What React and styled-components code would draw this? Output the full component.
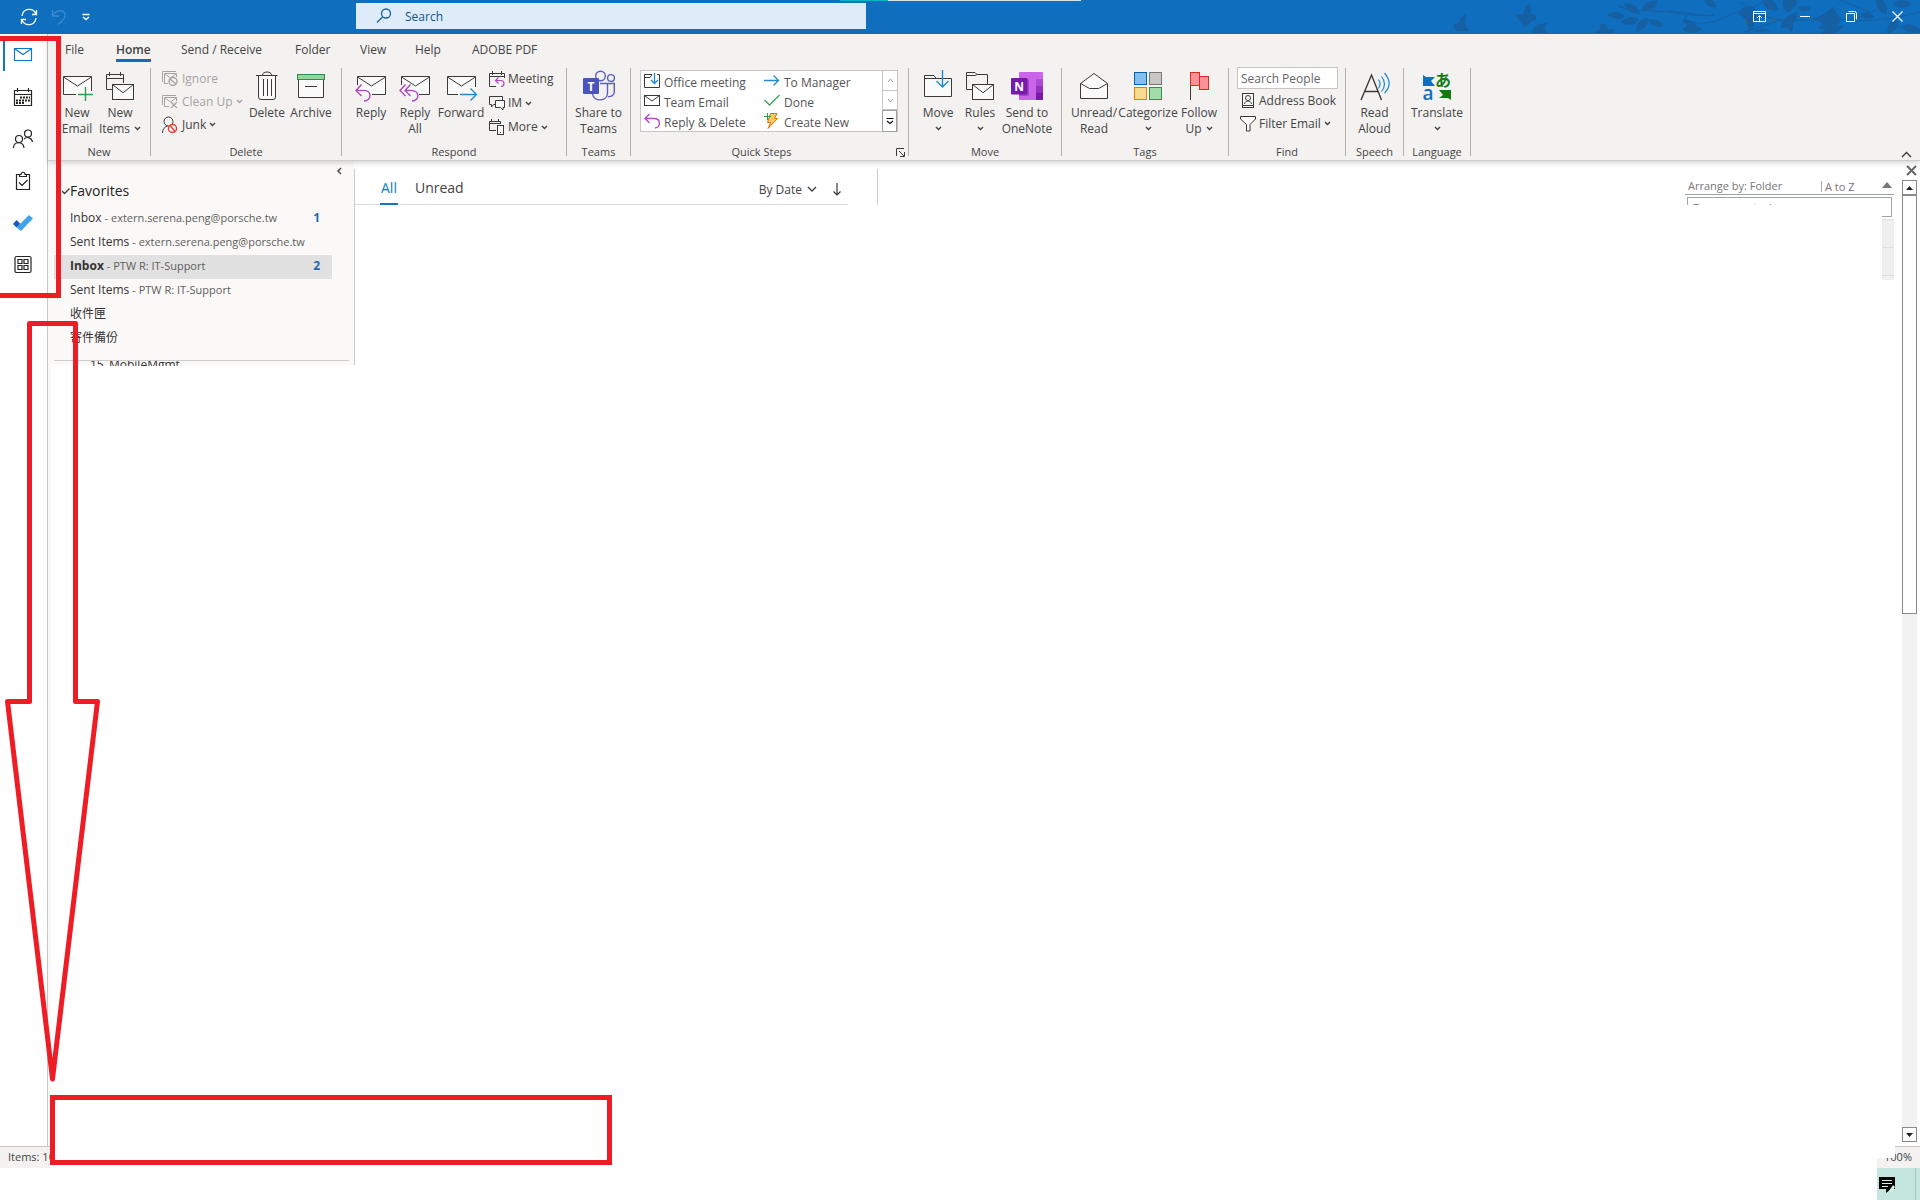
import React from 'react';
import styled, { createGlobalStyle } from 'styled-components';

const App = () => {
  return (
    <Page>
      <GlobalStyle />
      <TitleBar />
      <Body>
        <Rail />
        <Workspace>
          <Ribbon />
          <Content>
            <FolderPane />
            <PaneDivider $height={196} />
            <MessageList />
            <PaneDivider $height={36} />
            <FolderSizes />
            <ScrollBar />
          </Content>
        </Workspace>
      </Body>
      <StatusBar />
      <Taskbar />
      <Annotations />
    </Page>
  );
};

/* ---------- small shared drawings ---------- */

const Svg = ({ w, h = w, children, ...rest }) => (
  <svg width={w} height={h} viewBox={`0 0 ${w} ${h}`} fill='none' stroke='#3b3a39' aria-hidden='true' {...rest}>
    {children}
  </svg>
);

const Chevron = ({ color = '#444' }) => (
  <Svg w={7} h={5} stroke={color} strokeWidth='1.4'>
    <path d='M1 1l2.5 2.5L6 1' />
  </Svg>
);

const Envelope = ({ x, y, w, h }) => (
  <g transform={`translate(${x} ${y})`}>
    <rect width={w} height={h} fill='#fafafa' />
    <path d={`M0 0L${w / 2} ${h * 0.55}L${w} 0`} />
  </g>
);

const icons = {
  newEmail: (
    <Svg w={32}>
      <rect x='2.5' y='6.5' width='28' height='18' fill='#fafafa' stroke='none' />
      <path d='M15 24.500H2.500V6.500H30.500V21M2.500 7l14 9 14-9' />
      <path d='M24.500 17v14M17 24.500h15' stroke='#2f9e4f' strokeWidth='1.4' />
    </Svg>
  ),
  newItems: (
    <Svg w={32}>
      <path d='M8 19.500H2.500V4.500H19.500V13M2.500 8.500H19.500M5.500 2v4M16.500 2v4' />
      <Envelope x={8.5} y={14.5} w={21} h={15} />
    </Svg>
  ),
  trash: (
    <Svg w={32}>
      <path d='M7.500 6V27q0 2.500 2.500 2.500H22q2.500 0 2.500-2.500V6' fill='#fafafa' />
      <path d='M5 5.500H26.500M11.500 5c0-4 9-4 9 0M12.500 9v17M16.500 9v17M20.500 9v17' />
    </Svg>
  ),
  archive: (
    <Svg w={32}>
      <path d='M3.500 9V27.500H28.500V9' fill='#fafafa' />
      <rect x='2.5' y='4.5' width='27' height='5' fill='#92d49d' stroke='#2f8f46' />
      <path d='M10 16.500h12' />
    </Svg>
  ),
  reply: (
    <Svg w={32}>
      <rect x='2.5' y='6.5' width='28' height='18' fill='#fafafa' stroke='none' />
      <path d='M2.500 15V6.500H30.500V24.500H17M2.500 7l14 9 14-9' />
      <path d='M6.500 14.500L1 20.500l5.500 5.500M1 20.500h8c8 0 8 10 0 10.500' stroke='#b146c2' strokeWidth='1.4' />
    </Svg>
  ),
  replyAll: (
    <Svg w={32}>
      <rect x='2.5' y='6.5' width='28' height='18' fill='#fafafa' stroke='none' />
      <path d='M2.500 15V6.500H30.500V24.500H20M2.500 7l14 9 14-9' />
      <path d='M6.500 14.500L1 20.500l5.500 5.500M11.500 14.500L6 20.500l5.500 5.500M6 20.500h6c9 0 9 10 1 10.500' stroke='#b146c2' strokeWidth='1.4' />
    </Svg>
  ),
  forward: (
    <Svg w={32}>
      <rect x='2.5' y='6.5' width='28' height='18' fill='#fafafa' stroke='none' />
      <path d='M13 24.500H2.500V6.500H30.500V17M2.500 7l14 9 14-9' />
      <path d='M15 24.500H31.500M25.500 18.500l6 6-6 6' stroke='#1f8ad2' strokeWidth='1.4' />
    </Svg>
  ),
  teams: (
    <Svg w={32} stroke='#5b5fc7' strokeWidth='1.4'>
      <circle cx='17.5' cy='6' r='4.8' />
      <circle cx='28' cy='8' r='3.400' />
      <path d='M17 13.500H24.500V23c0 9-14 9-15 1M24.500 13.500H31.300V22c0 3-3 5-6.500 4.500' />
      <rect x='0' y='8' width='16' height='16' rx='1' fill='#4b53bc' stroke='none' />
      <text x='8' y='20.500' textAnchor='middle' fontSize='12' fontWeight='700' fill='#fff' stroke='none'>T</text>
    </Svg>
  ),
  move: (
    <Svg w={32}>
      <path d='M2.500 5.500H12l2 3H29.500V26.500H2.500zM2.500 8.500H14' fill='#fafafa' />
      <path d='M20.500 0V17M14.500 11l6 6 6-6' stroke='#1f8ad2' strokeWidth='1.4' />
    </Svg>
  ),
  rules: (
    <Svg w={32}>
      <path d='M8 19.500H2.500V2.500H11l2 2H23.500V14M2.500 5.500H11l2-1' />
      <Envelope x={8.5} y={14.5} w={21} h={15} />
    </Svg>
  ),
  oneNote: (
    <Svg w={32} stroke='none'>
      <rect x='8' y='2' width='24' height='28' rx='1' fill='#ca64ea' />
      <path d='M25 9h7v7h-7z' fill='#ae4bd5' />
      <path d='M25 16h7v7h-7z' fill='#9332bf' />
      <path d='M25 23h7v6q0 1-1 1h-6z' fill='#7719aa' />
      <path d='M8 9h9q1 0 1 1v15q0 1-1 1H8z' fill='#a349c8' />
      <rect x='0' y='8' width='16.500' height='16.500' rx='1' fill='#7719aa' />
      <text x='8.200' y='20.500' textAnchor='middle' fontSize='12' fontWeight='700' fill='#fff'>N</text>
    </Svg>
  ),
  openMail: (
    <Svg w={32}>
      <path d='M2.500 13.500L16 3.500l13.500 10V28.500H2.500z' fill='#fafafa' />
      <path d='M2.500 13.500l9 5h9l9-5' />
    </Svg>
  ),
  categorize: (
    <Svg w={32}>
      <rect x='2.500' y='2.500' width='12' height='12' fill='#83beec' stroke='#0063b1' />
      <rect x='17.500' y='2.500' width='12' height='12' fill='#c8c6c4' stroke='#797775' />
      <rect x='2.500' y='17.500' width='12' height='12' fill='#f8db8f' stroke='#e07e10' />
      <rect x='17.500' y='17.500' width='12' height='12' fill='#a1ddaa' stroke='#309048' />
    </Svg>
  ),
  flag: (
    <Svg w={32} stroke='#d92c20'>
      <path d='M7.500 2v28' stroke='#3b3a39' />
      <rect x='7.500' y='2.500' width='9' height='13' fill='#ff9199' />
      <rect x='16.500' y='6.500' width='9' height='13' fill='#ff9199' />
    </Svg>
  ),
  readAloud: (
    <Svg w={32}>
      <path d='M2 30L12.500 5 22.500 30M5.500 21.500H19' strokeWidth='1.4' />
      <path d='M19.500 9.500c2 3 2 6 0 9M22.500 6.500c4 5 4 10 0 15M25.500 3c6 7 6 14 0 20' stroke='#1f8ad2' strokeWidth='1.200' />
    </Svg>
  ),
  translate: (
    <Svg w={32} stroke='none'>
      <path d='M2 5l3 2 9 0-4 4 4 5H2z' fill='#106ebe' />
      <path d='M30 30l-3-2-9 0 4-3-4-5h12z' fill='#107c10' />
      <text x='1.500' y='30' fontSize='19' fontWeight='600' fill='#106ebe'>a</text>
      <text x='14' y='16' fontSize='16' fontWeight='700' fill='#107c10'>あ</text>
    </Svg>
  ),
  ignore: (
    <Svg w={18} stroke='#a6a4a2'>
      <path d='M1.500 12V1.500H15M3.500 14V3.500H15.500V7M4 4l5.500 4L15 4M3.500 13.500H7' />
      <circle cx='12' cy='11.500' r='4' strokeWidth='1.400' />
      <path d='M9 9l6 5' strokeWidth='1.400' />
    </Svg>
  ),
  cleanUp: (
    <Svg w={18} stroke='#a6a4a2'>
      <path d='M1.500 12V2.500H15M3.500 13.500V4.500H15.500V8M4 5l5.500 4L15 5M3.500 13.500H8' />
      <path d='M10 9l6 6M16 9l-6 6' strokeWidth='1.200' />
    </Svg>
  ),
  junk: (
    <Svg w={18}>
      <circle cx='7.500' cy='5.500' r='4.500' />
      <path d='M1.500 17c0-4 2-6 5-7' />
      <circle cx='11.500' cy='12.500' r='4' fill='#fff' stroke='#e8372c' strokeWidth='1.400' />
      <path d='M9 9.500l5 6' stroke='#e8372c' strokeWidth='1.400' />
    </Svg>
  ),
  meeting: (
    <Svg w={16}>
      <path d='M7 15.500H.500V2.500H15.500V7M.500 5.500H15.500M3.500 0v4M12.500 0v4' />
      <path d='M9.500 6.500l-3 3 3 3M7 9.500h5c4 0 4 6 0 6' stroke='#b146c2' strokeWidth='1.200' />
    </Svg>
  ),
  im: (
    <Svg w={16}>
      <path d='M6 9.500H4.500L2.500 12V9.500H.500V1.500H13.500V5' />
      <path d='M6.500 5.500H15.500V12.500H14V15l-2.500-2.500h-5z' fill='#fafafa' />
    </Svg>
  ),
  more: (
    <Svg w={16}>
      <path d='M7 11.500H.500V2.500H11.500V5M.500 4.500H11.500M2.500 0v3M9.500 0v3' />
      <rect x='8.500' y='6.500' width='6' height='9' fill='#fafafa' />
      <path d='M11 13.500h1' />
    </Svg>
  ),
  stepMove: (
    <Svg w={16}>
      <path d='M8 1.500H.500V14.500H15.500V1.500H13M.500 4.500H6l2-3' />
      <path d='M10.500 0v10M7 7l3.500 3.500L14 7' stroke='#1f8ad2' strokeWidth='1.300' />
    </Svg>
  ),
  stepMail: (
    <Svg w={16}>
      <rect x='.500' y='2.500' width='15' height='10' />
      <path d='M1 3l7 5 7-5' />
    </Svg>
  ),
  stepReply: (
    <Svg w={16} stroke='#b146c2' strokeWidth='1.300'>
      <path d='M5.500 1L1 5.500 5.500 10M1 5.500h9c7 0 7 9 1 9.500' />
    </Svg>
  ),
  stepForward: (
    <Svg w={16} stroke='#1f8ad2' strokeWidth='1.300'>
      <path d='M0 7.500h14.500M9.500 2.500l5 5-5 5' />
    </Svg>
  ),
  stepDone: (
    <Svg w={16} stroke='#3aa35b' strokeWidth='1.300'>
      <path d='M.500 7l5 5L15.500 2' />
    </Svg>
  ),
  stepNew: (
    <Svg w={16} stroke='#e07000'>
      <path d='M6.500.500H13L10.500 5.500H13.500L4 15.500 6.500 9.500H3.500z' fill='#ffc66b' />
      <path d='M3.500 0v7M0 3.500h7' stroke='#2f9e4f' />
    </Svg>
  ),
  addressBook: (
    <Svg w={16}>
      <rect x='2.500' y='.500' width='11' height='14' fill='#fafafa' />
      <path d='M2.500 12.500h11' />
      <circle cx='8' cy='5' r='2.500' />
      <path d='M4.500 11c.500-4 6.500-4 7 0' />
    </Svg>
  ),
  filter: (
    <Svg w={16}>
      <path d='M.500.500h15V3L10 8.500V15H6.500V8.500L.500 3z' fill='#fafafa' />
    </Svg>
  ),
};

/* ---------- title bar ---------- */

const Foliage = () => (
  <Svg w={480} h={34} fill='#155fa3' stroke='#155fa3' strokeWidth='1'>
    {/* birds */}
    <path stroke='none' d='M13 25l6-2 2-5 5-4-1 10 2 4 3 3-7 0-7 0zM75 15l8-1 3-8 4-3 1 10 5 3 0 4-5 1-4 5-3 1-4-6zM93 29l5-5 10-1-4 5 3 5H92zM155 32l5-3 1-5 4 0 3 5 6 0 0 4h-18z' />
    {/* branches */}
    <g fill='none'>
      <path d='M178 6c20 8 26 2 50 6s34 4 46 3M212 13c22-6 40 4 62 2M248 13l-6 12M252 22c24 6 44-14 60-14L326 0' />
      <path d='M300 2c24 16 30 20 74 18s50 6 106-8M304 32c16-4 22-8 38-12M410 22l26-12M445 20l24 12M400 0l30 12' />
    </g>
    {/* leaves */}
    <g stroke='none'>
      <path d='M167 15c8-5 13-3 18 2-7 4-12 2-18-2zM184 4c8-2 14 2 16 10-8 0-13-4-16-10zM181 22c5-5 12-6 18-3-3 6-11 8-18 3zM196 32c0-8 4-13 12-14 1 7-4 12-12 14zM202 9c3-6 8-9 15-8 0 7-6 11-15 8zM208 20c7-2 12 1 16 6-7 2-13 0-16-6z' />
      <path d='M264 0c2 5 6 8 12 7 0-4-3-7-6-7zM243 19c6 0 12 3 14 9-8 0-13-3-14-9zM242 29c7-5 15-4 20 0-6 5-14 5-20 0zM298 14c6-9 12-10 17-6 3 9 0 19-6 25-2-8 1-14-11-19z' />
      <path d='M322 0c2 8 8 12 16 10-1-6-5-10-8-10zM343 0h14c0 6-4 10-10 12-4-3-5-7-4-12zM340 28c2-9 8-14 18-15-1 9-8 16-18 15zM350 20c4 4 4 8 1 12-4-3-5-8-1-12zM313 32c6-4 13-4 17-1zM358 8c3-3 8-3 13 0-4 4-9 4-13 0z' />
      <path d='M372 18c14-1 14-8 22-11 1 5 4 8 8 13-6 8-16 12-24 8l6-4zM382 33c6-6 14-8 22-7-4 6-12 9-22 7zM436 0c0 8 4 13 10 14 3-5 0-11-4-14zM448 34c-2-8 2-13 8-14 4 5 1 11-8 14zM462 26c8-4 14-1 18 4v3c-8 0-15-1-18-7zM452 4c6-5 14-5 20 0-6 5-14 5-20 0zM420 14c6-3 12-1 14 3-5 3-11 2-14-3z' />
    </g>
  </Svg>
);

const TitleBar = () => (
  <Title>
    <QuickAccess>
      <TitleButton aria-label='Send/Receive All Folders'>
        <Svg w={18} stroke='#fff' strokeWidth='1.300'>
          <path d='M2 8c1-8 11-9 14-2M16.500 2v4.500H12M16 10c-1 8-11 9-14 2M1.500 16v-4.500H6' />
        </Svg>
      </TitleButton>
      <TitleButton aria-label='Undo'>
        <Svg w={16} stroke='#3c8ad0' strokeWidth='1.300'>
          <path d='M1.500 1v6H8M1.500 7C6-1 15 1 14 7c0 3-3 5-7 8.500' />
        </Svg>
      </TitleButton>
      <TitleButton aria-label='Customize'>
        <Svg w={8} h={8} stroke='#fff' strokeWidth='1.400'>
          <path d='M.500 1.500h7M1 4l3 2.500L7 4' />
        </Svg>
      </TitleButton>
    </QuickAccess>
    <SearchBox>
      <Svg w={16} stroke='#1b6098' strokeWidth='1.300'>
        <circle cx='10' cy='5.500' r='4.500' />
        <path d='M6.500 9L1 14.500' />
      </Svg>
      <input aria-label='Search' placeholder='Search' />
    </SearchBox>
    <TopStrip />
    <Decoration>
      <Foliage />
    </Decoration>
    <WindowButtons>
      <button aria-label='Ribbon display options'>
        <Svg w={13} h={11} stroke='#fff'>
          <path d='M.500.500h12v10H.500zM.500 2.500h12M6.500 10V5M4 7l2.500-2.500L9 7' />
        </Svg>
      </button>
      <button aria-label='Minimize'>
        <Svg w={10} h={11} stroke='#fff'><path d='M0 5.500h10' /></Svg>
      </button>
      <button aria-label='Restore'>
        <Svg w={11} stroke='#fff'><path d='M.500 2.500h8v8h-8zM2.500.500h6q2 0 2 2v6' /></Svg>
      </button>
      <button aria-label='Close'>
        <Svg w={11} stroke='#fff' strokeWidth='1.200'><path d='M.500.500l10 10M10.500.500l-10 10' /></Svg>
      </button>
    </WindowButtons>
  </Title>
);

/* ---------- left rail ---------- */

const Rail = () => (
  <RailNav aria-label='Modules'>
    <RailButton $active aria-label='Mail'>
      <Svg w={20} stroke='#0f78c8' strokeWidth='1.200'>
        <path d='M1.500 3.500h17v12h-17zM2 4l8 5.500L18 4' />
      </Svg>
    </RailButton>
    <RailButton aria-label='Calendar'>
      <Svg w={20} stroke='#252423' strokeWidth='1.200'>
        <path d='M1.500 3.500h17v15h-17zM1.500 7.500h17M4.500 1v4M15.500 1v4' />
        <path d='M7 10.500h10M3 13.500h14M3 16h9' strokeWidth='2' strokeDasharray='2 1' />
      </Svg>
    </RailButton>
    <RailButton aria-label='People'>
      <Svg w={20} stroke='#252423' strokeWidth='1.200'>
        <circle cx='6' cy='10' r='3.500' />
        <circle cx='15' cy='4.500' r='3.500' />
        <path d='M.500 19c0-7 10-7 10.500 0M11 10c3-3 8-1 8.500 3' />
      </Svg>
    </RailButton>
    <RailButton aria-label='Tasks'>
      <Svg w={20} stroke='#252423' strokeWidth='1.200'>
        <path d='M6 3.500H3.500v15h13v-15H14M6.500 5.500v-2H8c0-3 4-3 4 0h1.500v2zM6 11.500l3 3L14.500 9' />
      </Svg>
    </RailButton>
    <RailButton aria-label='To Do'>
      <Svg w={20} stroke='none'>
        <path d='M3.500 7l4 4-4 3.500L0 11z' fill='#185abd' />
        <path d='M3.500 14.500L16 2l4 3.500L8 18z' fill='#41a5ee' />
      </Svg>
    </RailButton>
    <RailButton aria-label='Apps'>
      <Svg w={20} stroke='#252423' strokeWidth='1.200'>
        <rect x='2' y='1.500' width='16' height='16' rx='1.500' />
        <path d='M5 4.500h4v4H5zM11 4.500h4v4h-4zM5 10.500h4v4H5zM11 10.500h4v4h-4z' />
      </Svg>
    </RailButton>
  </RailNav>
);

/* ---------- ribbon ---------- */

const tabs = [
  { label: 'File', width: 51 },
  { label: 'Home', width: 65, active: true },
  { label: 'Send / Receive', width: 114 },
  { label: 'Folder', width: 65 },
  { label: 'View', width: 55 },
  { label: 'Help', width: 57 },
  { label: 'ADOBE PDF', width: 80 },
];

const Big = ({ icon, lines, width, menu }) => (
  <BigButton $width={width}>
    {icons[icon]}
    {lines.map((line, i) => (
      <span key={line}>
        {line}
        {menu && i === 1 && <Chevron />}
      </span>
    ))}
    {menu && lines.length === 1 && <span><Chevron /></span>}
  </BigButton>
);

const Small = ({ icon, label, menu, disabled }) => (
  <SmallButton disabled={disabled}>
    {icons[icon]}
    <span>{label}</span>
    {menu && <Chevron color={disabled ? '#a6a4a2' : '#444'} />}
  </SmallButton>
);

const Group = ({ label, width, pad = 0, launcher, center, children }) => (
  <>
    <GroupBox $width={width}>
      <GroupControls $pad={pad} $center={center}>{children}</GroupControls>
      <GroupLabel $launcher={launcher}>{label}</GroupLabel>
      {launcher && (
        <Launcher aria-label='Quick Steps settings'>
          <Svg w={9}><path d='M.500 8V.500H8M3 3l5 5M8.500 4v4.500H4' /></Svg>
        </Launcher>
      )}
    </GroupBox>
    <GroupDivider />
  </>
);

const steps = [
  ['stepMove', 'Office meeting'],
  ['stepForward', 'To Manager'],
  ['stepMail', 'Team Email'],
  ['stepDone', 'Done'],
  ['stepReply', 'Reply & Delete'],
  ['stepNew', 'Create New'],
];

const Ribbon = () => (
  <RibbonBox>
    <TabRow>
      {tabs.map((tab) => (
        <Tab key={tab.label} $width={tab.width} $active={tab.active}>
          <span>{tab.label}</span>
        </Tab>
      ))}
    </TabRow>
    <GroupRow>
      <Group label='New' width={102} pad={8}>
        <Big icon='newEmail' lines={['New', 'Email']} width={42} />
        <Big icon='newItems' lines={['New', 'Items']} width={44} menu />
      </Group>
      <Group label='Delete' width={190} pad={10}>
        <SmallColumn $width={86} $row={23}>
          <Small icon='ignore' label='Ignore' disabled />
          <Small icon='cleanUp' label='Clean Up' menu disabled />
          <Small icon='junk' label='Junk' menu />
        </SmallColumn>
        <Big icon='trash' lines={['Delete']} width={40} />
        <Big icon='archive' lines={['Archive']} width={48} />
      </Group>
      <Group label='Respond' width={224} pad={7}>
        <Big icon='reply' lines={['Reply']} width={44} />
        <Big icon='replyAll' lines={['Reply', 'All']} width={44} />
        <Big icon='forward' lines={['Forward']} width={48} />
        <SmallColumn $width={80} $pad={4} $row={24}>
          <Small icon='meeting' label='Meeting' />
          <Small icon='im' label='IM' menu />
          <Small icon='more' label='More' menu />
        </SmallColumn>
      </Group>
      <Group label='Teams' width={63} center>
        <Big icon='teams' lines={['Share to', 'Teams']} width={60} />
      </Group>
      <Group label='Quick Steps' width={277} pad={9} launcher>
        <Gallery>
          <StepGrid>
            {steps.map(([icon, label]) => (
              <Step key={label}>
                {icons[icon]}
                {label}
              </Step>
            ))}
          </StepGrid>
          <GalleryScroll>
            <button aria-label='Previous row'>
              <Svg w={7} h={5} stroke='#a19f9d'><path d='M1 4l2.500-3L6 4' /></Svg>
            </button>
            <button aria-label='Next row'>
              <Svg w={7} h={5} stroke='#a19f9d'><path d='M1 1l2.500 3L6 1' /></Svg>
            </button>
            <button aria-label='More quick steps'>
              <Svg w={8} h={8} stroke='#111' strokeWidth='1.200'><path d='M.500 1.500h7M1 4l3 2.500L7 4' /></Svg>
            </button>
          </GalleryScroll>
        </Gallery>
      </Group>
      <Group label='Move' width={152} pad={7}>
        <Big icon='move' lines={['Move']} width={44} menu />
        <Big icon='rules' lines={['Rules']} width={40} menu />
        <Big icon='oneNote' lines={['Send to', 'OneNote']} width={54} />
      </Group>
      <Group label='Tags' width={166} pad={8}>
        <Big icon='openMail' lines={['Unread/', 'Read']} width={48} />
        <Big icon='categorize' lines={['Categorize']} width={60} menu />
        <Big icon='flag' lines={['Follow', 'Up']} width={42} menu />
      </Group>
      <Group label='Find' width={116} pad={8}>
        <FindColumn>
          <input aria-label='Search People' placeholder='Search People' />
          <Small icon='addressBook' label='Address Book' />
          <Small icon='filter' label='Filter Email' menu />
        </FindColumn>
      </Group>
      <Group label='Speech' width={57} center>
        <Big icon='readAloud' lines={['Read', 'Aloud']} width={52} />
      </Group>
      <Group label='Language' width={66} center>
        <Big icon='translate' lines={['Translate']} width={60} menu />
      </Group>
      <CollapseRibbon aria-label='Collapse the ribbon'>
        <Svg w={11} h={7} strokeWidth='1.300'><path d='M1 6l4.500-4.500L10 6' /></Svg>
      </CollapseRibbon>
    </GroupRow>
  </RibbonBox>
);

/* ---------- panes ---------- */

const favorites = [
  { name: 'Inbox', account: 'extern.serena.peng@porsche.tw', count: 1 },
  { name: 'Sent Items', account: 'extern.serena.peng@porsche.tw' },
  { name: 'Inbox', account: 'PTW R: IT-Support', count: 2, selected: true },
  { name: 'Sent Items', account: 'PTW R: IT-Support' },
  { name: '收件匣' },
  { name: '寄件備份' },
];

const FolderPane = () => (
  <FolderNav aria-label='Folders'>
    <CollapsePane aria-label='Collapse folder pane'>
      <Svg w={6} h={8} stroke='#555' strokeWidth='1.600'><path d='M5 1L2 4l3 3' /></Svg>
    </CollapsePane>
    <FavoritesTitle>
      <Svg w={8} h={8} strokeWidth='1.400'><path d='M0 4l2.500 2.500L7.500 1.500' /></Svg>
      Favorites
    </FavoritesTitle>
    {favorites.map((folder) => (
      <Folder key={folder.name + folder.account} $selected={folder.selected}>
        <b>{folder.name}</b>
        {folder.account && <small>- {folder.account}</small>}
        {folder.count && <i>{folder.count}</i>}
      </Folder>
    ))}
    <ClippedFolder>15_MobileMgmt</ClippedFolder>
  </FolderNav>
);

const MessageList = () => (
  <ListHeader>
    <ListTab $active>All</ListTab>
    <ListTab>Unread</ListTab>
    <SortButton>
      By Date
      <Svg w={10} h={7} strokeWidth='1.300'><path d='M1 1l4 4 4-4' /></Svg>
    </SortButton>
    <SortButton aria-label='Reverse sort'>
      <Svg w={8} h={13} strokeWidth='1.200'><path d='M4 0v12M.500 8.500L4 12l3.500-3.500' /></Svg>
    </SortButton>
  </ListHeader>
);

const FolderSizes = () => (
  <Arrange>
    <ArrangeHeader>
      <span>Arrange by: Folder</span>
      <span>A to Z</span>
      <Svg w={10} h={6} fill='#777' stroke='none'><path d='M0 6l5-6 5 6z' /></Svg>
    </ArrangeHeader>
    <TaskField>
      <span>Type a new task</span>
    </TaskField>
    <TaskRow $height={28} />
    <TaskRow $height={28} />
    <TaskRow $height={5} />
  </Arrange>
);

const ScrollBar = () => (
  <ScrollColumn>
    <ScrollClose aria-label='Close pane'>
      <Svg w={11} stroke='#666' strokeWidth='2'><path d='M1 1l9 9M10 1l-9 9' /></Svg>
    </ScrollClose>
    <ScrollButton aria-label='Scroll up'>
      <Svg w={7} h={4} fill='#222' stroke='none'><path d='M0 4l3.500-4L7 4z' /></Svg>
    </ScrollButton>
    <ScrollTrack>
      <ScrollThumb />
    </ScrollTrack>
    <ScrollButton aria-label='Scroll down'>
      <Svg w={7} h={4} fill='#222' stroke='none'><path d='M0 0l3.500 4L7 0z' /></Svg>
    </ScrollButton>
  </ScrollColumn>
);

const StatusBar = () => (
  <Status>
    <ItemCount>Items: 10</ItemCount>
    <ZoomLevel>100%</ZoomLevel>
  </Status>
);

const Taskbar = () => (
  <TaskbarRow>
    <Tray aria-label='Notifications'>
      <Svg w={17} h={17} stroke='none'>
        <path d='M0 1h16v12h-4l-5 4v-4H0z' fill='#000' />
        <path d='M3 4h10v1H3zM3 7h10v1H3zM3 10h6v1H3zM10 15l4-6 2 2-3 5z' fill='#d8f0ea' />
      </Svg>
    </Tray>
  </TaskbarRow>
);

const Annotations = () => (
  <>
    <Mark $x={-5} $y={36} $w={66} $h={262} />
    <ArrowMark>
      <Svg w={110} h={775} stroke='#ee1c24' strokeWidth='5' strokeLinejoin='round'>
        <path d='M29.500 8.500h46v378h22L52.500 764 7.500 386.500h22z' />
      </Svg>
    </ArrowMark>
    <Mark $x={50} $y={1095} $w={562} $h={70} />
  </>
);

/* ---------- styles ---------- */

const GlobalStyle = createGlobalStyle`
  * {
    box-sizing: border-box;
  }

  body {
    margin: 0;
    background: #fff;
    overflow: hidden;
  }

  body, button, input, svg text {
    font-family: 'Open Sans', 'Noto Sans CJK TC', sans-serif;
  }

  button {
    margin: 0;
    padding: 0;
    border: 0;
    background: none;
    color: inherit;
    font-size: inherit;
    line-height: inherit;
  }

  svg {
    flex: none;
    display: block;
  }
`;

const Page = styled.div`
  position: relative;
  min-height: 100vh;
  display: flex;
  flex-direction: column;
  font-size: 12px;
  line-height: 16px;
  color: #444;
`;

const Title = styled.header`
  position: relative;
  display: flex;
  height: 34px;
  background: #106ebe;
`;

const QuickAccess = styled.div`
  width: 356px;
  padding-left: 20px;
  display: flex;
  align-items: center;
  gap: 13px;
`;

const TitleButton = styled.button`
  min-width: 18px;
  height: 34px;
`;

const SearchBox = styled.label`
  width: 510px;
  height: 26px;
  margin-top: 3px;
  padding-left: 20px;
  display: flex;
  align-items: center;
  gap: 13px;
  background: #deecf9;

  input {
    flex: 1;
    border: 0;
    padding: 0;
    background: none;
    font-size: 12px;
  }

  input::placeholder {
    color: #0f548c;
    opacity: 1;
  }
`;

const TopStrip = styled.div`
  position: absolute;
  top: 0;
  left: 840px;
  width: 241px;
  height: 1px;
  background: linear-gradient(90deg, #00b7c3 48px, #d6e4ea 48px);
`;

const Decoration = styled.div`
  position: absolute;
  top: 0;
  right: 0;
  height: 34px;
  overflow: hidden;
`;

const WindowButtons = styled.div`
  position: relative;
  margin-left: auto;
  display: flex;

  button {
    width: 46px;
    height: 32px;
    display: flex;
    align-items: center;
    justify-content: center;
  }
`;

const Body = styled.div`
  flex: 1;
  display: flex;
`;

const RailNav = styled.nav`
  width: 48px;
  border-right: 1px solid #c8c6c4;
`;

const RailButton = styled.button`
  width: 44px;
  height: 42px;
  padding-left: 13px;
  display: flex;
  align-items: center;
  background: ${(props) => (props.$active ? 'linear-gradient(#0f78c8, #0f78c8) 3px 7px / 2px 30px no-repeat' : 'none')};
`;

const Workspace = styled.main`
  flex: 1;
  min-width: 0;
  display: flex;
  flex-direction: column;
`;

const RibbonBox = styled.section`
  position: relative;
  background: #f3f2f1;
  border-bottom: 1px solid #cfcdcb;
  box-shadow: 0 2px 5px rgba(0, 0, 0, 0.16);
`;

const TabRow = styled.div`
  display: flex;
  height: 34px;
  padding-left: 17px;
`;

const Tab = styled.button`
  width: ${(props) => props.$width}px;
  height: 28px;
  font-size: 12px;
  font-weight: ${(props) => (props.$active ? 600 : 400)};
  text-align: left;
  white-space: nowrap;

  span {
    display: inline-block;
    padding-top: 8px;
    height: 28px;
    border-bottom: ${(props) => (props.$active ? '3px solid #106ebe' : '0')};
  }
`;

const GroupRow = styled.div`
  display: flex;
  height: 92px;
`;

const GroupBox = styled.div`
  position: relative;
  width: ${(props) => props.$width}px;
  display: flex;
  flex-direction: column;
`;

const GroupControls = styled.div`
  height: 76px;
  padding-left: ${(props) => props.$pad}px;
  display: flex;
  justify-content: ${(props) => (props.$center ? 'center' : 'flex-start')};
`;

const GroupLabel = styled.div`
  padding-right: ${(props) => (props.$launcher ? 16 : 0)}px;
  font-size: 11px;
  text-align: center;
`;

const GroupDivider = styled.div`
  width: 1px;
  height: 88px;
  background: #b3b0ad;
`;

const Launcher = styled.button`
  position: absolute;
  right: 3px;
  bottom: 3px;
`;

const BigButton = styled.button`
  width: ${(props) => props.$width}px;
  padding-top: 2px;
  display: flex;
  flex-direction: column;
  align-items: center;
  white-space: nowrap;

  svg + span {
    margin-top: 3px;
  }

  span {
    height: 16px;
    display: flex;
    align-items: center;
    gap: 4px;
  }

  span svg {
    margin-bottom: 2px;
  }
`;

const SmallColumn = styled.div`
  width: ${(props) => props.$width}px;
  margin-top: -1px;
  padding-left: ${(props) => props.$pad || 0}px;
  display: grid;
  grid-auto-rows: ${(props) => props.$row}px;
`;

const SmallButton = styled.button`
  display: flex;
  align-items: center;
  gap: 3px;
  white-space: nowrap;
  color: ${(props) => (props.disabled ? '#a6a4a2' : '#444')};
`;

const Gallery = styled.div`
  width: 258px;
  height: 62px;
  margin-top: 2px;
  display: flex;
  background: #fff;
  border: 1px solid #c8c6c4;
`;

const StepGrid = styled.div`
  flex: 1;
  padding: 2px 0 0 3px;
  display: grid;
  grid-template-columns: 120px 1fr;
  grid-auto-rows: 20px;
`;

const Step = styled.button`
  height: 20px;
  display: flex;
  align-items: center;
  gap: 4px;
  white-space: nowrap;
  color: #555;

  svg {
    margin-bottom: 4px;
  }
`;

const GalleryScroll = styled.div`
  width: 15px;
  display: grid;
  grid-template-rows: 20px 19px 22px;

  button {
    display: flex;
    align-items: center;
    justify-content: center;
    border-left: 1px solid #c8c6c4;
    border-bottom: 1px solid #c8c6c4;
  }

  button:last-child {
    border: 1px solid #a19f9d;
  }
`;

const FindColumn = styled.div`
  width: 101px;
  display: grid;
  grid-template-rows: 21px 23px 23px;

  input {
    width: 101px;
    height: 22px;
    margin-top: -1px;
    padding: 0 3px;
    border: 1px solid #c8c6c4;
    font-size: 12px;
  }

  input::placeholder {
    color: #666;
    opacity: 1;
  }

  button {
    padding-left: 3px;
  }
`;

const CollapseRibbon = styled.button`
  margin-left: auto;
  padding-right: 8px;
  align-self: flex-end;
  height: 12px;
`;

const Content = styled.div`
  flex: 1;
  display: flex;
  align-items: flex-start;
  padding: 8px 3px 4px 0;
  box-shadow: inset 3px 0 #faf9f8;
`;

const PaneDivider = styled.div`
  width: 1px;
  height: ${(props) => props.$height}px;
  background: #cfcdcb;
`;

const FolderNav = styled.nav`
  width: 306px;
  height: 204px;
  margin-top: -8px;
  padding: 6px 5px 0 6px;
  background: #faf9f8;
`;

const CollapsePane = styled.button`
  display: flex;
  margin-left: auto;
  padding-right: 7px;
  height: 10px;
`;

const FavoritesTitle = styled.div`
  height: 30px;
  padding: 0 0 2px 8px;
  display: flex;
  align-items: center;
  font-size: 14px;
  color: #252423;
`;

const Folder = styled.button`
  width: 278px;
  height: 24px;
  padding: 0 12px 2px 16px;
  display: flex;
  align-items: center;
  gap: 3px;
  white-space: nowrap;
  background: ${(props) => (props.$selected ? '#e1e1e1' : 'none')};

  b {
    font-weight: ${(props) => (props.$selected ? 700 : 400)};
    color: #333;
  }

  small {
    font-size: 11px;
    color: #5f5d5b;
  }

  i {
    margin-left: auto;
    font-style: normal;
    font-weight: 700;
    color: #2266b2;
  }
`;

const ClippedFolder = styled.div`
  height: 6px;
  margin-top: 9px;
  padding-left: 36px;
  overflow: hidden;
  border-top: 1px solid #cfcdcb;
  line-height: 8px;
  color: #333;
`;

const ListHeader = styled.div`
  width: 493px;
  height: 36px;
  margin-right: 29px;
  padding-left: 25px;
  display: flex;
  border-bottom: 1px solid #dddbd9;
`;

const ListTab = styled.button`
  height: 36px;
  margin-right: 16px;
  padding: 4px 1px 0;
  font-size: 14px;
  color: ${(props) => (props.$active ? '#0f78c8' : '#444')};
  border-bottom: ${(props) => (props.$active ? '2px solid #0f78c8' : '2px solid transparent')};
`;

const SortButton = styled.button`
  display: flex;
  align-items: center;
  gap: 5px;
  margin-right: 7px;
  padding-top: 6px;
  font-size: 12px;

  ${ListTab} + & {
    margin-left: auto;
    margin-right: 16px;
  }
`;

const Arrange = styled.section`
  width: 209px;
  margin-left: auto;
`;

const ArrangeHeader = styled.div`
  height: 26px;
  padding: 9px 2px 0 3px;
  display: grid;
  grid-template-columns: 133px 1fr auto;
  align-items: center;
  border-bottom: 1px solid #9a9fa8;
  font-size: 11px;
  color: #777;

  span + span {
    padding-left: 3px;
    line-height: 11px;
    border-left: 1px solid #aaa;
  }

  svg {
    margin-bottom: 2px;
  }
`;

const TaskField = styled.div`
  position: relative;
  height: 20px;
  margin: 2px 2px 2px 2px;
  padding-left: 5px;
  border: 1px solid #a0a4ac;
  font-size: 11px;
  line-height: 20px;
  color: #777;

  /* hides everything but the outer edge of the field */
  &::after {
    content: '';
    position: absolute;
    left: -1px;
    right: 9px;
    top: 7px;
    bottom: -1px;
    background: #fff;
  }
`;

const TaskRow = styled.div`
  width: 12px;
  height: ${(props) => props.$height}px;
  margin-left: auto;
  background: #efefef;
  border-top: 1px solid #dedede;
`;

const ScrollColumn = styled.div`
  width: 15px;
  margin-left: 8px;
  align-self: stretch;
  display: flex;
  flex-direction: column;
`;

const ScrollClose = styled.button`
  margin-top: -4px;
  height: 15px;
  display: flex;
  justify-content: flex-end;
`;

const ScrollButton = styled.button`
  height: 15px;
  display: flex;
  align-items: center;
  justify-content: center;
  background: #fff;
  border: 1px solid #8a8a8a;
`;

const ScrollTrack = styled.div`
  flex: 1;
  background: #f2f2f2;
`;

const ScrollThumb = styled.div`
  height: 45%;
  background: #fff;
  border: 1px solid #8a8a8a;
`;

const Status = styled.footer`
  height: 22px;
  display: flex;
  justify-content: space-between;
  font-size: 11px;
  line-height: 20px;
`;

const ItemCount = styled.div`
  width: 50px;
  padding-left: 8px;
  overflow: hidden;
  white-space: nowrap;
  background: #f3f2f1;
  border-top: 1px solid #c8c6c4;
`;

const ZoomLevel = styled.div`
  position: relative;
  width: 43px;
  padding-right: 8px;
  text-align: right;
  background: #f3f2f1;
  border-top: 1px solid #c8c6c4;

  &::before {
    content: '';
    position: absolute;
    top: -1px;
    left: 0;
    width: 18px;
    height: 12px;
    background: #fff;
  }
`;

const TaskbarRow = styled.div`
  height: 32px;
  display: flex;
  justify-content: flex-end;
`;

const Tray = styled.button`
  width: 43px;
  padding-left: 2px;
  display: flex;
  align-items: center;
  background: linear-gradient(#9ccbc4, #9ccbc4) 38px 0 / 1px 32px no-repeat, #c5e5df;
`;

const Mark = styled.div`
  position: absolute;
  left: ${(props) => props.$x}px;
  top: ${(props) => props.$y}px;
  width: ${(props) => props.$w}px;
  height: ${(props) => props.$h}px;
  border: 5px solid #ee1c24;
  pointer-events: none;
`;

const ArrowMark = styled.div`
  position: absolute;
  left: 0;
  top: 315px;
  pointer-events: none;
`;

export default App;
